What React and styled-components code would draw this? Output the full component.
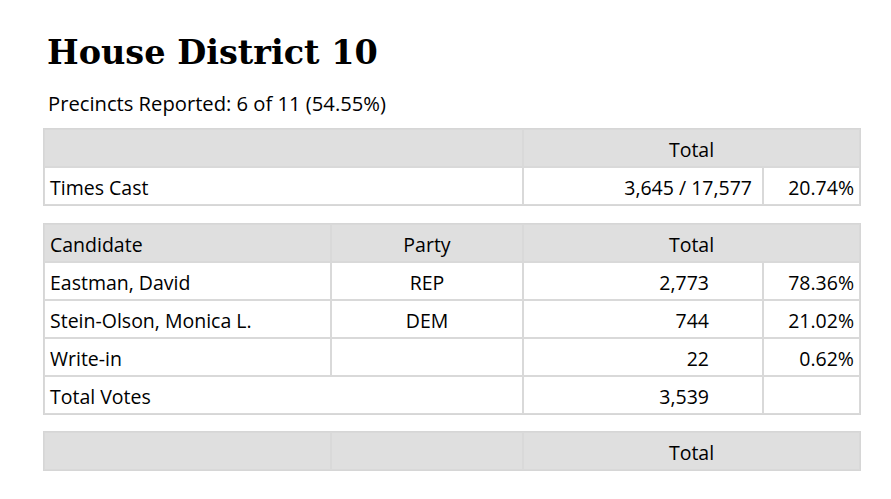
import styled, { createGlobalStyle } from "styled-components";

const GlobalStyle = createGlobalStyle`
  body {
    margin: 0;
    background: #fff;
    font-family: "Open Sans", "Noto Sans", sans-serif;
    color: #000;
  }
`;

const candidates = [
  { name: "Eastman, David", party: "REP", votes: "2,773", pct: "78.36%" },
  { name: "Stein-Olson, Monica L.", party: "DEM", votes: "744", pct: "21.02%" },
  { name: "Write-in", party: "", votes: "22", pct: "0.62%" },
];

const App = () => {
  return (
    <Page>
      <GlobalStyle />
      <Title>House District 10</Title>
      <Reported>Precincts Reported: 6 of 11 (54.55%)</Reported>

      <Table $gap={11}>
        <colgroup>
          <col style={{ width: 479 }} />
          <col style={{ width: 240 }} />
          <col style={{ width: 97 }} />
        </colgroup>
        <thead>
          <tr>
            <HeadCell />
            <HeadCell colSpan={2} align="center">
              Total
            </HeadCell>
          </tr>
        </thead>
        <tbody>
          <tr>
            <Cell>Times Cast</Cell>
            <Cell align="right" $padRight={10}>
              3,645 / 17,577
            </Cell>
            <Cell align="right">20.74%</Cell>
          </tr>
        </tbody>
      </Table>

      <Table $gap={17}>
        <colgroup>
          <col style={{ width: 287 }} />
          <col style={{ width: 192 }} />
          <col style={{ width: 240 }} />
          <col style={{ width: 97 }} />
        </colgroup>
        <thead>
          <tr>
            <HeadCell>Candidate</HeadCell>
            <HeadCell align="center">Party</HeadCell>
            <HeadCell colSpan={2} align="center">
              Total
            </HeadCell>
          </tr>
        </thead>
        <tbody>
          {candidates.map((c) => (
            <tr key={c.name}>
              <Cell>{c.name}</Cell>
              <Cell align="center">{c.party}</Cell>
              <Cell align="right" $padRight={53}>
                {c.votes}
              </Cell>
              <Cell align="right">{c.pct}</Cell>
            </tr>
          ))}
          <tr>
            <Cell colSpan={2}>Total Votes</Cell>
            <Cell align="right" $padRight={53}>
              3,539
            </Cell>
            <Cell />
          </tr>
        </tbody>
      </Table>

      <Table $gap={16}>
        <colgroup>
          <col style={{ width: 287 }} />
          <col style={{ width: 192 }} />
          <col style={{ width: 337 }} />
        </colgroup>
        <thead>
          <tr>
            <HeadCell />
            <HeadCell />
            <HeadCell align="center">Total</HeadCell>
          </tr>
        </thead>
      </Table>
    </Page>
  );
};

const Page = styled.main`
  padding: 29px 0 0 43px;
  width: 816px;
`;

const Title = styled.h1`
  margin: 0 0 0 4px;
  font-family: "DejaVu Serif", "Liberation Serif", serif;
  font-weight: 700;
  font-size: 33.5px;
  line-height: 48px;
`;

const Reported = styled.p`
  margin: 12px 0 0 5px;
  font-size: 20.2px;
  line-height: 28px;
`;

const Table = styled.table`
  width: 816px;
  table-layout: fixed;
  border-collapse: separate;
  border-spacing: 0;
  border: 1px solid #d6d6d6;
  margin-top: ${(p) => p.$gap}px;
`;

const Cell = styled.td`
  height: 38px;
  box-sizing: border-box;
  padding: 2px ${(p) => p.$padRight || 5}px 0 5px;
  border: 1px solid #d9d9d9;
  font-size: 19.5px;
  text-align: ${(p) => p.align || "left"};
  white-space: nowrap;
`;

const HeadCell = styled(Cell).attrs({ as: "th" })`
  background: #dfdfdf;
  font-weight: 400;
`;

export default App;
